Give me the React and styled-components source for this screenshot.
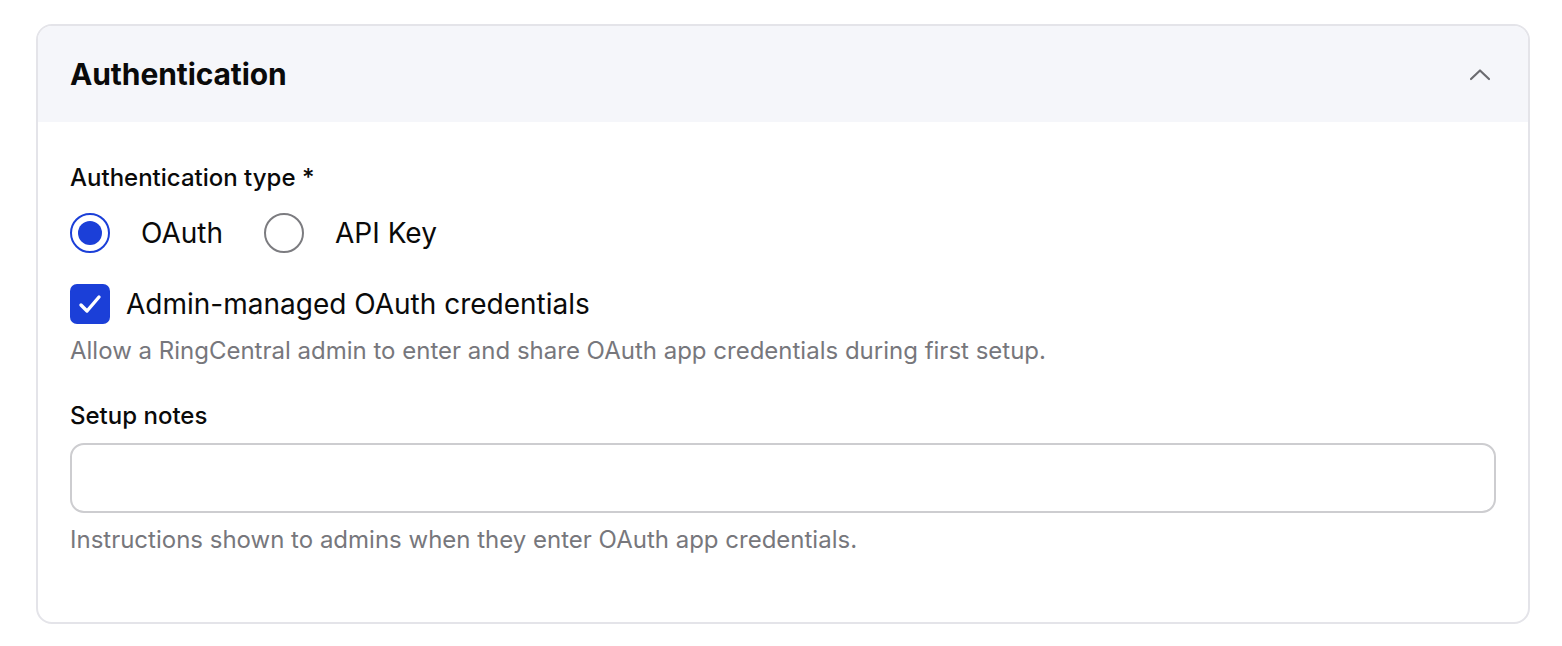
import React, { useState } from 'react';
import styled, { createGlobalStyle } from 'styled-components';

const GlobalStyle = createGlobalStyle`
  body {
    margin: 0;
    background: #ffffff;
    font-family: Inter, "Noto Sans", sans-serif;
    color: #0a0a0a;
  }
`;

const Page = styled.div`
  padding: 24px 32px 24px 36px;
`;

const Card = styled.section`
  border: 2px solid #e4e4e9;
  border-radius: 16px;
  overflow: hidden;
  background: #ffffff;
`;

const Header = styled.div`
  display: flex;
  align-items: center;
  justify-content: space-between;
  height: 96px;
  padding: 0 34px 0 32px;
  background: #f5f6fa;
`;

const Title = styled.h2`
  margin: 0;
  font-size: 30px;
  font-weight: 700;
  letter-spacing: -0.1px;
`;

const Toggle = styled.button`
  display: flex;
  align-items: center;
  justify-content: center;
  width: 28px;
  height: 28px;
  padding: 0;
  border: none;
  background: none;
  color: #6b6b70;
  cursor: pointer;
`;

const Body = styled.div`
  display: flex;
  flex-direction: column;
  padding: 41px 32px 67px 32px;
`;

const Label = styled.div`
  font-size: 24px;
  line-height: 30px;
  font-weight: 500;
  margin-top: ${(p) => p.$top || 0}px;
`;

const RadioGroup = styled.div`
  display: flex;
  align-items: center;
  gap: 41px;
  margin-top: 20px;
`;

const RadioOption = styled.label`
  display: flex;
  align-items: center;
  gap: 31px;
  font-size: 28px;
  line-height: 40px;
  cursor: pointer;
`;

const RadioCircle = styled.span`
  box-sizing: border-box;
  width: 40px;
  height: 40px;
  border-radius: 50%;
  border: 2px solid ${(p) => (p.$checked ? '#1b3fd8' : '#7c7c80')};
  display: flex;
  align-items: center;
  justify-content: center;

  &::after {
    content: '';
    width: 24px;
    height: 24px;
    border-radius: 50%;
    background: #1b3fd8;
    display: ${(p) => (p.$checked ? 'block' : 'none')};
  }
`;

const CheckRow = styled.label`
  display: flex;
  align-items: center;
  gap: 16px;
  margin-top: 31px;
  font-size: 28px;
  line-height: 40px;
  cursor: pointer;
`;

const CheckBox = styled.span`
  width: 40px;
  height: 40px;
  border-radius: 7px;
  background: ${(p) => (p.$checked ? '#1b3fd8' : '#ffffff')};
  display: flex;
  align-items: center;
  justify-content: center;
`;

const Help = styled.div`
  font-size: 24px;
  line-height: 30px;
  color: #77777c;
  margin-top: ${(p) => p.$top || 0}px;
`;

const TextInput = styled.input`
  box-sizing: border-box;
  margin-top: 12px;
  height: 70px;
  width: 100%;
  border: 2px solid #cdcdd0;
  border-radius: 14px;
  padding: 0 20px;
  font-family: inherit;
  font-size: 24px;
  outline: none;
`;

const ChevronUp = () => (
  <svg width="22" height="14" viewBox="0 0 22 14" fill="none">
    <path d="M2 12 L11 3.5 L20 12" stroke="currentColor" strokeWidth="2.2" strokeLinecap="round" strokeLinejoin="round" />
  </svg>
);

const CheckMark = () => (
  <svg width="26" height="26" viewBox="0 0 26 26" fill="none">
    <path d="M4 14 L10 20 L22 6" stroke="#ffffff" strokeWidth="3.4" strokeLinecap="round" strokeLinejoin="round" />
  </svg>
);

export default function App() {
  const [authType, setAuthType] = useState('oauth');
  const [adminManaged, setAdminManaged] = useState(true);

  return (
    <Page>
      <GlobalStyle />
      <Card>
        <Header>
          <Title>Authentication</Title>
          <Toggle aria-label="Collapse"><ChevronUp /></Toggle>
        </Header>
        <Body>
          <Label>Authentication type *</Label>
          <RadioGroup>
            <RadioOption onClick={() => setAuthType('oauth')}>
              <RadioCircle $checked={authType === 'oauth'} />
              OAuth
            </RadioOption>
            <RadioOption onClick={() => setAuthType('apikey')}>
              <RadioCircle $checked={authType === 'apikey'} />
              API Key
            </RadioOption>
          </RadioGroup>
          <CheckRow onClick={() => setAdminManaged(!adminManaged)}>
            <CheckBox $checked={adminManaged}>{adminManaged && <CheckMark />}</CheckBox>
            Admin-managed OAuth credentials
          </CheckRow>
          <Help $top={12}>Allow a RingCentral admin to enter and share OAuth app credentials during first setup.</Help>
          <Label $top={35}>Setup notes</Label>
          <TextInput type="text" />
          <Help $top={12}>Instructions shown to admins when they enter OAuth app credentials.</Help>
        </Body>
      </Card>
    </Page>
  );
}
